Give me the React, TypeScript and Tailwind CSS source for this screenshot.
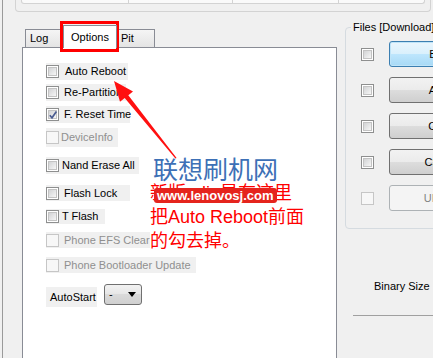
import React from "react";

type Opt = {
  label: string;
  row: string;
  gap: string;
  checked?: boolean;
  disabled?: boolean;
};

// option rows of the Options tab, spacing taken from the screenshot
const options: Opt[] = [
  { label: "Auto Reboot", row: "mt-0 h-[17px] w-[82px]", gap: "ml-[6px]" },
  { label: "Re-Partition", row: "mt-[4px] h-[17px] w-[80px]", gap: "ml-[5px]" },
  { label: "F. Reset Time", row: "mt-[5px] h-[17px] w-[84px]", gap: "ml-[5px]", checked: true },
  { label: "DeviceInfo", row: "mt-[5px] h-[19px] w-[72px]", gap: "ml-[2px]", disabled: true },
  { label: "Nand Erase All", row: "mt-[10px] h-[17px] w-[93px]", gap: "ml-[3px]" },
  { label: "Flash Lock", row: "mt-[11px] h-[16px] w-[84px]", gap: "ml-[5px]" },
  { label: "T Flash", row: "mt-[8px] h-[15px] w-[59px]", gap: "ml-[3px]" },
  { label: "Phone EFS Clear", row: "mt-[8px] h-[16px] w-[104px]", gap: "ml-[5px]", disabled: true },
  { label: "Phone Bootloader Update", row: "mt-[9px] h-[16px] w-[150px]", gap: "ml-[5px]", disabled: true },
];

const files = [
  { label: "BL", kind: "focus" },
  { label: "AP", kind: "normal" },
  { label: "CP", kind: "normal" },
  { label: "CSC", kind: "normal" },
  { label: "UMS", kind: "disabled" },
];

const CheckBox = ({ checked, disabled }: { checked?: boolean; disabled?: boolean }) => (
  <span
    className={`relative flex h-[13px] w-[13px] shrink-0 items-center justify-center border ${
      disabled ? "border-[#c6c6c6] bg-[#f7f7f7]" : "border-[#8e8f8f] bg-white"
    }`}
  >
    {!disabled && (
      <span className="h-[9px] w-[9px] border border-[#c3c3c3] bg-[linear-gradient(135deg,#d2d3d5,#f6f6f6)]" />
    )}
    {checked && (
      <svg className="absolute left-[1px] top-[1px]" width="10" height="10" viewBox="0 0 10 10">
        <path d="M1.8 5.2 L4 7.8 L8.4 1.6" fill="none" stroke="#4b5d91" strokeWidth="1.7" />
      </svg>
    )}
  </span>
);

export default function App() {
  return (
    <div className="relative h-[358px] w-[433px] overflow-hidden bg-[#f0f0f0] font-['Liberation_Sans',Arial,sans-serif] text-[11px] text-black">
      <div className="ml-[2px] flex h-full flex-col border-l border-[#9a9a9a]">
        {/* port boxes at the top */}
        <div className="ml-[12px] h-[12px] w-[416px] shrink-0 rounded-b-[4px] border border-t-0 border-[#d3d3d3] px-[5px]">
          <div className="flex h-[4px] rounded-b-[3px] border border-t-0 border-[#d3d3d3] bg-[#fafafa]">
            <div className="w-[107px] border-r border-[#d3d3d3]" />
            <div className="w-[104px] border-r border-[#d3d3d3]" />
            <div className="w-[106px] border-r border-[#d3d3d3]" />
            <div className="flex-1" />
          </div>
        </div>

        <div className="mt-[9px] flex">
          {/* tab control */}
          <div className="ml-[19px] flex w-[315px] shrink-0 flex-col pt-[4px]">
            <div className="flex h-[22px] items-end pl-[3px]">
              <div className="flex h-[18px] w-[39px] items-center border border-b-0 border-[#898c95] bg-[linear-gradient(to_bottom,#f5f5f5,#e4e4e4)] pl-[4px]">
                Log
              </div>
              <div className="relative z-10 -mb-px ml-[-1px] flex h-[23px] w-[54px] items-center justify-center border border-b-0 border-[#898c95] bg-white">
                Options
              </div>
              <div className="ml-[-1px] flex h-[18px] w-[39px] items-center border border-b-0 border-[#898c95] bg-[linear-gradient(to_bottom,#f5f5f5,#e4e4e4)] pl-[4px]">
                Pit
              </div>
            </div>
            <div className="flex h-[320px] flex-col items-start border border-[#898c95] bg-white pl-[23px] pt-[15px]">
              {options.map((o) => (
                <div key={o.label} className={`flex items-center bg-[#f0f0f0] ${o.row}`}>
                  <CheckBox checked={o.checked} disabled={o.disabled} />
                  <span className={`${o.gap} whitespace-nowrap ${o.disabled ? "text-[#8f8f8f]" : "text-black"}`}>
                    {o.label}
                  </span>
                </div>
              ))}
              <div className="mt-[11px] flex items-start">
                <div className="mt-[3px] flex h-[20px] w-[51px] items-center bg-[#f0f0f0] pl-[4px]">AutoStart</div>
                <div className="ml-[7px] flex h-[21px] w-[38px] items-center justify-between rounded-[3px] border border-[#707070] bg-[linear-gradient(to_bottom,#f2f2f2,#e6e6e6_50%,#dadada_50%,#d0d0d0)] pl-[4px] pr-[5px]">
                  <span>-</span>
                  <svg width="8" height="5" viewBox="0 0 8 5">
                    <polygon points="0,0 8,0 4,5" fill="#000" />
                  </svg>
                </div>
              </div>
            </div>
          </div>

          {/* right column */}
          <div className="ml-[8px] flex shrink-0 flex-col">
            <fieldset className="h-[208px] w-[100px] rounded-[4px] border border-[#d5dbe0]">
              <legend className="ml-[5px] px-[2px] leading-[13px]">Files [Download]</legend>
              <div className="flex flex-col gap-[10px] pt-[7px]">
                {files.map((f) => (
                  <div key={f.label} className="flex h-[26px] items-center pl-[15px]">
                    <CheckBox disabled={f.kind === "disabled"} />
                    <div
                      className={`ml-[15px] flex h-[26px] w-[94px] shrink-0 items-center justify-center rounded-[3px] border ${
                        f.kind === "focus"
                          ? "border-[#3c7fb1] bg-[linear-gradient(to_bottom,#eaf6fd,#d9f0fc_50%,#bee6fd_50%,#a7d9f5)] shadow-[inset_0_0_0_1px_#bfe4f8]"
                          : f.kind === "normal"
                          ? "border-[#707070] bg-[linear-gradient(to_bottom,#f2f2f2,#ebebeb_50%,#dddddd_50%,#cfcfcf)]"
                          : "border-[#adb2b5] bg-[#f4f4f4] text-[#838383]"
                      }`}
                    >
                      {f.label}
                    </div>
                  </div>
                ))}
              </div>
            </fieldset>
            <div className="mt-[47px] flex h-[20px] items-center pl-[29px]">
              <span className="whitespace-nowrap">Binary Size</span>
              <div className="ml-[4px] h-[20px] w-[60px] shrink-0 border border-[#abadb3] bg-white" />
            </div>
            <div className="ml-[8px] mt-[19px] w-[100px] border-t border-[#a0a0a0]" />
          </div>
        </div>
      </div>

      {/* annotation: red frame round the tab */}
      <div className="absolute left-[60px] top-[21px] h-[31px] w-[59px] border-[3px] border-[#ff0000]" />

      {/* annotation: arrow */}
      <svg className="absolute left-0 top-0" width="433" height="358" viewBox="0 0 433 358">
        <polygon
          points="114,81 133,91.6 128.3,95.2 176.6,158 175.4,158.6 124.7,98.1 120,101.8"
          fill="#ff1010"
        />
      </svg>

      {/* annotation: note text */}
      <div className="absolute left-[150px] top-[181px] font-['Liberation_Sans','Noto_Sans_CJK_SC',sans-serif] text-[18px] leading-[24px] text-[#ff0000]">
        <div className="whitespace-nowrap">新版odin是在这里</div>
        <div className="whitespace-nowrap">把Auto Reboot前面</div>
        <div className="whitespace-nowrap">的勾去掉。</div>
      </div>
      <div className="absolute left-[154px] top-[188px] flex h-[15px] items-center rounded-[3px] bg-[#e5241d] px-[3px] text-[13px] font-bold leading-none text-white">
        www.lenovosj.com
      </div>
      <div className="absolute left-[153px] top-[156px] font-['Noto_Sans_CJK_SC',sans-serif] text-[25px] leading-none text-[#3d70b6]">
        联想刷机网
      </div>
    </div>
  );
}
